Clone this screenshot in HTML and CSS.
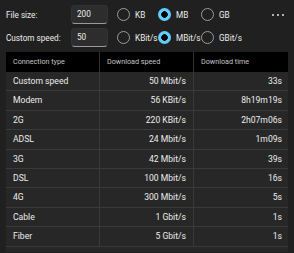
FILE: index.html
```html
<!DOCTYPE html>
<html>
<head>
<meta charset="utf-8">
<link rel="stylesheet" href="styles.css">
</head>
<body>
<div class="controls">
  <div class="label">File size:</div>
  <div class="cell"><div class="input">200</div></div>
  <div class="opt"><span class="radio"></span>KB</div>
  <div class="opt"><span class="radio on"></span>MB</div>
  <div class="opt"><span class="radio"></span>GB</div>
  <div class="more"><span></span><span></span><span></span></div>

  <div class="label">Custom speed:</div>
  <div class="cell"><div class="input">50</div></div>
  <div class="opt"><span class="radio"></span>KBit/s</div>
  <div class="opt"><span class="radio on"></span>MBit/s</div>
  <div class="opt"><span class="radio"></span>GBit/s</div>
  <div></div>
</div>
<div class="table">
  <div class="head">
    <div class="c">Connection type</div>
    <div class="c">Download speed</div>
    <div class="c">Download time</div>
  </div>
  <div class="row"><div class="c">Custom speed</div><div class="c r">50 Mbit/s</div><div class="c r">33s</div></div>
  <div class="row"><div class="c">Modem</div><div class="c r">56 KBit/s</div><div class="c r">8h19m19s</div></div>
  <div class="row"><div class="c">2G</div><div class="c r">220 KBit/s</div><div class="c r">2h07m06s</div></div>
  <div class="row"><div class="c">ADSL</div><div class="c r">24 Mbit/s</div><div class="c r">1m09s</div></div>
  <div class="row"><div class="c">3G</div><div class="c r">42 Mbit/s</div><div class="c r">39s</div></div>
  <div class="row"><div class="c">DSL</div><div class="c r">100 Mbit/s</div><div class="c r">16s</div></div>
  <div class="row"><div class="c">4G</div><div class="c r">300 Mbit/s</div><div class="c r">5s</div></div>
  <div class="row"><div class="c">Cable</div><div class="c r">1 Gbit/s</div><div class="c r">1s</div></div>
  <div class="row"><div class="c">Fiber</div><div class="c r">5 Gbit/s</div><div class="c r">1s</div></div>
</div>
</body>
</html>
```
FILE: styles.css
```css
html, body {
  margin: 0;
  background: #202020;
  color: #ededed;
  font-family: Roboto, "Noto Sans", sans-serif;
  width: 294px;
  height: 253px;
  overflow: hidden;
}
.controls {
  display: grid;
  grid-template-columns: 65px 46px 41px 43px 1fr auto;
  grid-auto-rows: 19px;
  row-gap: 4px;
  padding: 5px 10px 0 6px;
  align-items: center;
  font-size: 8.2px;
}
.label { white-space: nowrap; }
.input {
  width: 37px;
  height: 19px;
  box-sizing: border-box;
  background: #2d2d2d;
  border: 1px solid #333;
  border-bottom: 1px solid #9a9a9a;
  border-radius: 4px;
  padding-left: 5px;
  line-height: 17px;
}
.opt {
  display: flex;
  align-items: center;
  gap: 5px;
  white-space: nowrap;
}
.radio {
  width: 13px;
  height: 13px;
  box-sizing: border-box;
  border: 1px solid #9b9b9b;
  border-radius: 50%;
  flex: none;
}
.radio.on {
  border: none;
  background: radial-gradient(circle, #000 0 3px, #60cdff 3.5px);
}
.more {
  display: flex;
  gap: 3px;
}
.more span {
  width: 2px;
  height: 2px;
  border-radius: 50%;
  background: #e0e0e0;
}
.table {
  margin: 5px 6px 0 6px;
  background: #272727;
  padding-bottom: 5px;
}
.head, .row {
  display: grid;
  grid-template-columns: 93px 94px 95px;
}
.head {
  background: #000;
  height: 20px;
  font-size: 7.2px;
  color: #c4c4c4;
}
.head .c {
  padding-left: 7px;
  line-height: 20px;
  border-left: 1px solid #333;
}
.head .c:first-child { border-left: none; }
.row {
  height: 19.4px;
  box-sizing: border-box;
  border-bottom: 1px solid #3a3a3a;
  font-size: 8.6px;
}
.row .c {
  padding: 0 7px;
  line-height: 18.4px;
  border-left: 1px solid #3a3a3a;
  white-space: nowrap;
}
.row .c:first-child { border-left: none; }
.row .c.r { text-align: right; }
.row .c:last-child { padding-right: 6px; }
```
